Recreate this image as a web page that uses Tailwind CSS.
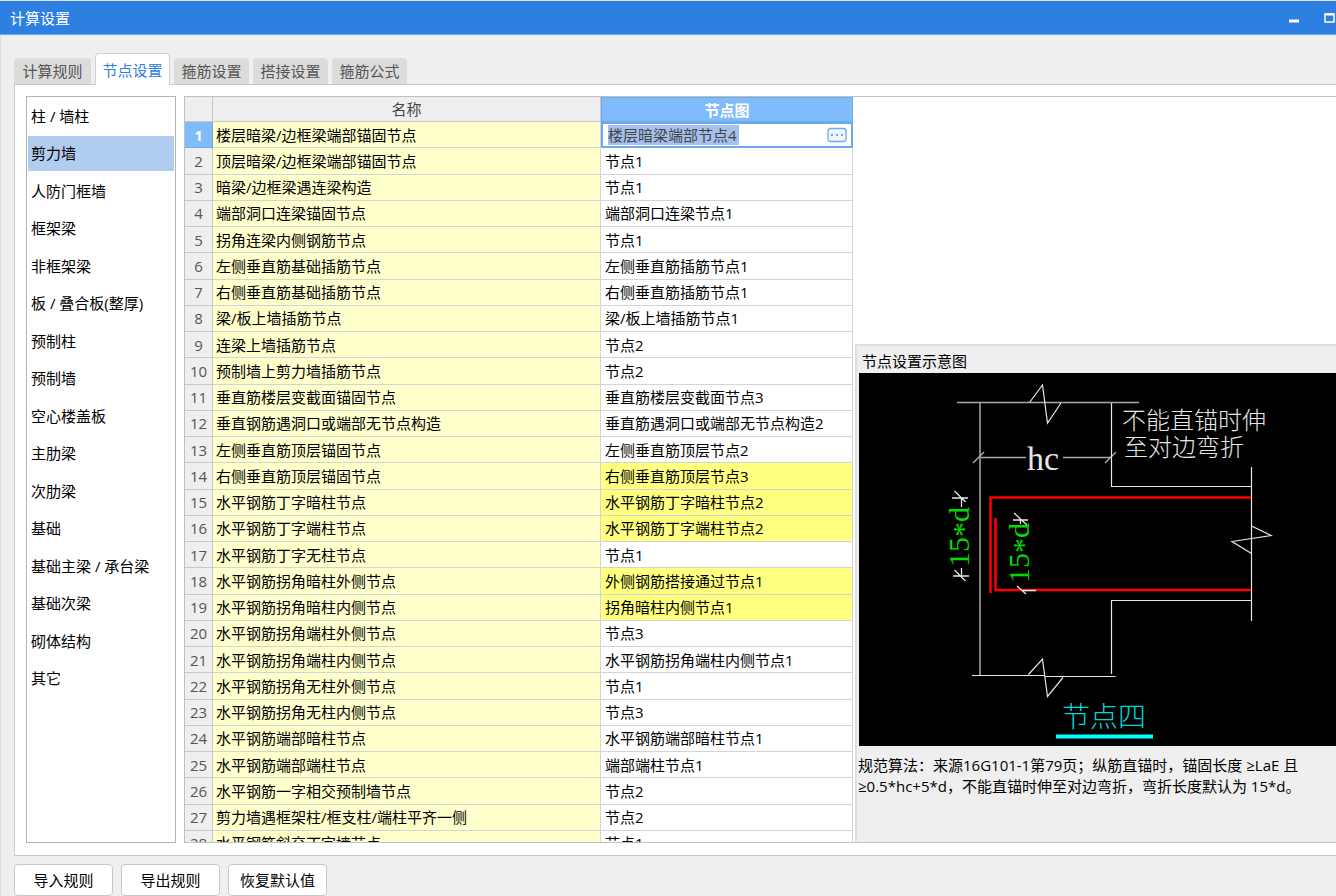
<!DOCTYPE html>
<html lang="zh-CN">
<head>
<meta charset="utf-8">
<title>计算设置</title>
<script src="https://cdn.jsdelivr.net/npm/@tailwindcss/browser@4"></script>
</head>
<body class="flex h-screen flex-col overflow-hidden bg-[#efefef] font-['Open_Sans','Noto_Sans_CJK_SC',sans-serif] text-[15px] leading-5 text-black">
<header class="flex h-[35px] shrink-0 items-center justify-between border-t border-b border-t-[#dfe6ee] border-b-[#6fa5ea] bg-[#2d80e2] pl-[10px] text-white">
  <h1>计算设置</h1>
  <div class="flex gap-6">
    <button type="button" aria-label="最小化" class="h-4 w-3"><svg class="h-4 w-3" viewBox="0 0 12 16"><path d="M1 11h10" stroke="#fff" stroke-width="3"/></svg></button>
    <button type="button" aria-label="最大化" class="h-4 w-3"><svg class="h-4 w-3" viewBox="0 0 12 16"><path d="M1 12V4h9v8z" fill="none" stroke="#fff" stroke-width="1.5"/><path d="M1 4.500h9" stroke="#fff" stroke-width="2"/></svg></button>
  </div>
</header>
<main class="flex min-h-0 grow flex-col border-l border-[#dcdfe4] pt-[18px] pl-[13px]">
  <nav class="z-10 -mb-px flex shrink-0 items-end gap-1" role="tablist">
    <button type="button" role="tab" class="mb-px h-[26px] w-[77px] rounded-t bg-[#dcdcdc] text-[#555]">计算规则</button>
    <button type="button" role="tab" aria-selected="true" class="h-8 w-[75px] rounded-t border border-b-0 border-[#ccd1d8] bg-white text-[#2d80e2]">节点设置</button>
    <button type="button" role="tab" class="mb-px h-[26px] w-[75px] rounded-t bg-[#dcdcdc] text-[#555]">箍筋设置</button>
    <button type="button" role="tab" class="mb-px h-[26px] w-[75px] rounded-t bg-[#dcdcdc] text-[#555]">搭接设置</button>
    <button type="button" role="tab" class="mb-px h-[26px] w-[75px] rounded-t bg-[#dcdcdc] text-[#555]">箍筋公式</button>
  </nav>
  <section class="flex min-h-0 grow gap-2 border border-r-0 border-[#c8ccd2] bg-white pt-[11px] pb-3 pl-[11px]">
    <div class="w-[150px] shrink-0 border border-[#b4b4b4] p-px">
      <ul id="cats" class="grid h-[600px] auto-rows-fr"></ul>
    </div>
    <div class="flex min-w-0 grow overflow-hidden border border-r-0 border-[#c0c0c0]">
      <table class="h-[760px] w-[668px] shrink-0 table-fixed border-separate border-spacing-0">
        <colgroup><col class="w-7"><col class="w-[388px]"><col></colgroup>
        <thead>
          <tr class="h-[25px] text-[#444]">
            <th class="border-r border-b border-[#c8c8c8] bg-[#efefef] p-0"></th>
            <th class="border-r border-b border-[#c8c8c8] bg-[#efefef] p-0 font-normal">名称</th>
            <th class="border border-[#6cabe9] bg-[#80bbfb] p-0 font-bold text-white">节点图</th>
          </tr>
        </thead>
        <tbody id="rows"></tbody>
      </table>
      <div class="flex min-w-0 grow flex-col">
        <aside class="mt-auto ml-[2px] flex h-[498px] flex-col border-t-2 border-l-2 border-[#e0e0e0] bg-[#efefef]">
          <h2 class="pt-[5px] pb-[2px] pl-[5px]">节点设置示意图</h2>
          <svg id="diagram" class="ml-[2px] h-[373px] w-[477px] shrink-0 bg-black" viewBox="859 373 477 373" fill="none" stroke="#e6e6e6" stroke-width="1" role="img" aria-label="节点四">
            <g stroke="#a8a8a8" stroke-width="1.500">
              <path d="M957 402.500H1139M980 403V675"/>
              <path d="M980 457.500H1026M1063 457.500H1111M973 463l11-11M1105 463l11-11"/>
            </g>
            <path stroke-width="1.200" d="M1111.500 403V486.500H1251M1251.500 467V621M1251 600.500H1111.500V674M972 675.500H1045M1045 676.500H1115.500"/>
            <path stroke-width="1.200" d="M1029.500 402.500L1042.500 385L1047.500 423L1061 403M1028.500 674.500L1042.500 659L1047.500 696.500L1063 677.500"/>
            <path stroke-width="1.200" d="M1251.500 526L1271 535.500L1232 541.500L1251.500 553.500"/>
            <path stroke="#f00" stroke-width="2.500" d="M1251 497.500H990.500V593M995.500 518V590H1251"/>
            <path stroke-width="1.300" d="M952 498H968M961.500 498V507M954.500 491l11 11M953 576H969M961.500 568V576M954.500 570l11 11M1013 520H1028M1020.500 520V524M1014 513l13 12M1022 590.500H1036M1017 586l9 8"/>
            <g stroke="none" font-family="'Liberation Serif','Noto Sans CJK SC',serif">
              <text x="1027" y="470" font-size="34" fill="#e6e6e6">hc</text>
              <g fill="#00dc00" font-size="30">
                <text transform="translate(969 567) rotate(-90)">15<tspan dy="4">*</tspan><tspan dy="-4">d</tspan></text>
                <text transform="translate(1029 583) rotate(-90)">15<tspan dy="4">*</tspan><tspan dy="-4">d</tspan></text>
              </g>
              <g font-weight="300">
                <text x="1122" y="429" font-size="24" fill="#e6e6e6">不能直锚时伸</text>
                <text x="1124" y="456" font-size="24" fill="#e6e6e6">至对边弯折</text>
                <text x="1062" y="727" font-size="28" fill="#00d8dc">节点四</text>
              </g>
            </g>
            <path stroke="#0ff" stroke-width="4" d="M1056 736.500H1153"/>
          </svg>
          <p class="pt-[9px] pl-px leading-[21px]">规范算法：来源16G101-1第79页；纵筋直锚时，锚固长度 ≥LaE 且<br>≥0.5*hc+5*d，不能直锚时伸至对边弯折，弯折长度默认为 15*d。</p>
        </aside>
      </div>
    </div>
  </section>
  <footer class="flex h-10 shrink-0 gap-2 pt-2">
    <button type="button" class="h-8 w-[99px] rounded border border-[#c8c8c8] bg-white">导入规则</button>
    <button type="button" class="h-8 w-[99px] rounded border border-[#c8c8c8] bg-white">导出规则</button>
    <button type="button" class="h-8 w-[99px] rounded border border-[#c8c8c8] bg-white">恢复默认值</button>
  </footer>
</main>
<script>
const cats = ['柱 / 墙柱','剪力墙','人防门框墙','框架梁','非框架梁','板 / 叠合板(整厚)','预制柱','预制墙','空心楼盖板','主肋梁','次肋梁','基础','基础主梁 / 承台梁','基础次梁','砌体结构','其它'];
document.getElementById('cats').innerHTML = cats.map((c, i) =>
  `<li class="pb-[2px]"><button type="button" class="${i === 1 ? 'h-full w-full bg-[#b0ccee] pl-[3px] text-left' : 'h-full w-full pl-[3px] text-left'}">${c}</button></li>`).join('');
const rows = [
['楼层暗梁/边框梁端部锚固节点','楼层暗梁端部节点4'],['顶层暗梁/边框梁端部锚固节点','节点1'],['暗梁/边框梁遇连梁构造','节点1'],['端部洞口连梁锚固节点','端部洞口连梁节点1'],['拐角连梁内侧钢筋节点','节点1'],['左侧垂直筋基础插筋节点','左侧垂直筋插筋节点1'],['右侧垂直筋基础插筋节点','右侧垂直筋插筋节点1'],['梁/板上墙插筋节点','梁/板上墙插筋节点1'],['连梁上墙插筋节点','节点2'],['预制墙上剪力墙插筋节点','节点2'],['垂直筋楼层变截面锚固节点','垂直筋楼层变截面节点3'],['垂直钢筋遇洞口或端部无节点构造','垂直筋遇洞口或端部无节点构造2'],['左侧垂直筋顶层锚固节点','左侧垂直筋顶层节点2'],['右侧垂直筋顶层锚固节点','右侧垂直筋顶层节点3'],['水平钢筋丁字暗柱节点','水平钢筋丁字暗柱节点2'],['水平钢筋丁字端柱节点','水平钢筋丁字端柱节点2'],['水平钢筋丁字无柱节点','节点1'],['水平钢筋拐角暗柱外侧节点','外侧钢筋搭接通过节点1'],['水平钢筋拐角暗柱内侧节点','拐角暗柱内侧节点1'],['水平钢筋拐角端柱外侧节点','节点3'],['水平钢筋拐角端柱内侧节点','水平钢筋拐角端柱内侧节点1'],['水平钢筋拐角无柱外侧节点','节点1'],['水平钢筋拐角无柱内侧节点','节点3'],['水平钢筋端部暗柱节点','水平钢筋端部暗柱节点1'],['水平钢筋端部端柱节点','端部端柱节点1'],['水平钢筋一字相交预制墙节点','节点2'],['剪力墙遇框架柱/框支柱/端柱平齐一侧','节点2'],['水平钢筋斜交丁字墙节点','节点1']];
const changed = [14, 15, 16, 18, 19];
document.getElementById('rows').innerHTML = rows.map(([name, node], i) => {
  const n = i + 1;
  const head = n === 1
    ? '<th class="border-r border-b border-[#6cabe9] bg-[#80bbfb] p-0 font-bold text-white">1</th>'
    : `<th class="border-r border-b border-[#c8c8c8] bg-[#efefef] p-0 font-normal text-[#555]">${n}</th>`;
  const value = n === 1
    ? `<td class="border-2 border-[#6cabe9] bg-white p-0"><div class="flex h-5 items-center justify-between pr-1 pl-[5px]"><input aria-label="节点图" value="${node}" size="10" class="h-5 w-[131px] bg-[#a3c1ec] text-[#444] outline-none"><button type="button" aria-label="选择节点" class="h-4 w-5"><svg class="h-4 w-5" viewBox="0 0 20 16"><rect x="1" y="1.500" width="18" height="13" rx="2.500" fill="#f0f6fc" stroke="#6cabe9" stroke-width="1.300"/><path d="M4 8h2m3 0h2m3 0h2" stroke="#6cabe9" stroke-width="2"/></svg></button></div></td>`
    : `<td class="${changed.includes(n) ? 'border-r border-b border-[#d4d4d8] bg-[#ffff80] py-0 pr-0 pl-1' : 'border-r border-b border-[#d4d4d8] bg-white py-0 pr-0 pl-1'}">${node}</td>`;
  return `<tr class="h-[26px]">${head}<td class="border-r border-b border-[#d4d4d8] bg-[#ffffcc] py-0 pr-0 pl-[3px]">${name}</td>${value}</tr>`;
}).join('');
</script>
</body>
</html>
